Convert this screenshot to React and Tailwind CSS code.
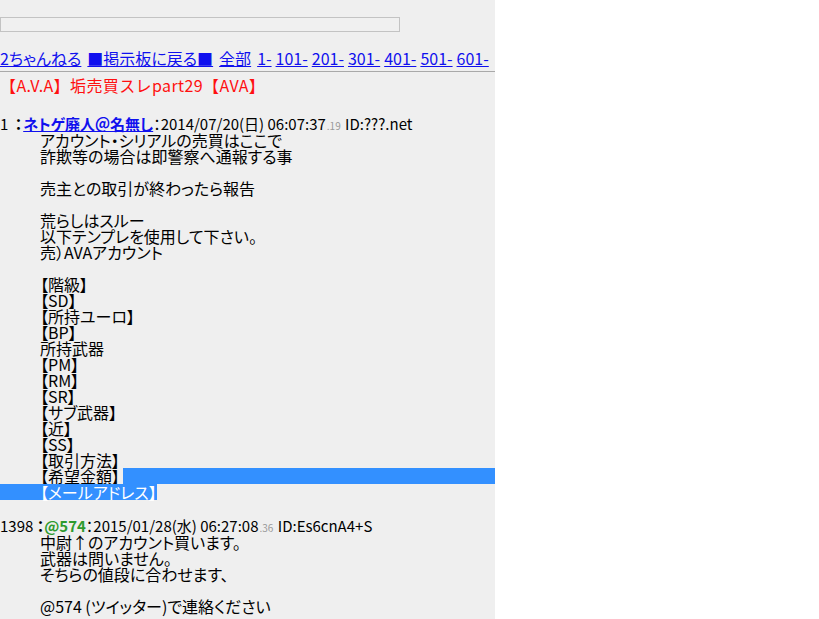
const FONT = { fontFamily: '"Noto Sans CJK JP", "Noto Sans", sans-serif' };

const NAV = ["1-", "101-", "201-", "301-", "401-", "501-", "601-"];

const BODY1 = [
  "アカウント・シリアルの売買はここで",
  "詐欺等の場合は即警察へ通報する事",
  "",
  "売主との取引が終わったら報告",
  "",
  "荒らしはスルー",
  "以下テンプレを使用して下さい。",
  "売）AVAアカウント",
  "",
  "【階級】",
  "【SD】",
  "【所持ユーロ】",
  "【BP】",
  "所持武器",
  "【PM】",
  "【RM】",
  "【SR】",
  "【サブ武器】",
  "【近】",
  "【SS】",
  "【取引方法】",
];

const BODY2 = [
  "中尉↑のアカウント買います。",
  "武器は問いません。",
  "そちらの値段に合わせます、",
  "",
  "@574 (ツイッター)で連絡ください",
];

function Line({ children }) {
  return <div className="h-4 pl-10 whitespace-nowrap">{children || "\u00a0"}</div>;
}

export default function App() {
  return (
    <div
      className="flex w-[819px] h-[619px] bg-white overflow-hidden text-[16px] leading-4 text-black [font-feature-settings:'palt']"
      style={FONT}
    >
      <div className="w-[495px] h-full bg-[#efefef] overflow-hidden shrink-0">
        <div className="pt-[17px]">
          <div className="w-[400px] h-[15px] border border-[#c3c3c3] bg-[#f0f0f0]" />
        </div>

        <div className="mt-[14px] h-[20px] flex items-end gap-[6px] whitespace-nowrap text-[#1010ee]">
          <a href="#" className="underline">2ちゃんねる</a>
          <a href="#" className="underline">■掲示板に戻る■</a>
          <a href="#" className="underline">全部</a>
          <div className="flex gap-[4px]">
            {NAV.map((n) => (
              <a key={n} href="#" className="underline">{n}</a>
            ))}
          </div>
        </div>
        <div className="mt-[5px] h-px bg-[#a9a9a9]" />

        <div className="mt-[5px] h-[18px] text-[#ff1010] whitespace-nowrap tracking-[0.4px] [font-feature-settings:normal]">
          【A.V.A】垢売買スレpart29【AVA】
        </div>

        <div className="mt-[21px]">
          <div className="h-4 whitespace-nowrap text-[15px]">
            1 <b className="ml-[3px] mr-[1px]">：</b>
            <a href="#" className="text-[#1010ee] font-bold underline">ネトゲ廃人＠名無し</a>
            ：2014/07/20(日) 06:07:37<span className="text-[10px] text-[#9a9a9a] px-[1px]">.19</span> ID:???.net
          </div>
          {BODY1.map((t, i) => (
            <Line key={i}>{t}</Line>
          ))}
          <div className="h-4 flex whitespace-nowrap">
            <span className="pl-10 pr-[3px]">【希望金額】</span>
            <span className="flex-1 bg-[#3390ff]" />
          </div>
          <div className="h-4 flex">
            <span className="pl-10 bg-[#3390ff] text-white whitespace-nowrap">【メールアドレス】</span>
          </div>
        </div>

        <div className="mt-[18px]">
          <div className="h-4 whitespace-nowrap text-[15px]">
            1398 <b>：</b>
            <span className="text-[#2e9a2e] font-bold">@574</span>
            ：2015/01/28(水) 06:27:08<span className="text-[10px] text-[#9a9a9a] px-[1px]">.36</span> ID:Es6cnA4+S
          </div>
          {BODY2.map((t, i) => (
            <Line key={i}>{t}</Line>
          ))}
        </div>
      </div>
      <div className="flex-1" />
    </div>
  );
}
